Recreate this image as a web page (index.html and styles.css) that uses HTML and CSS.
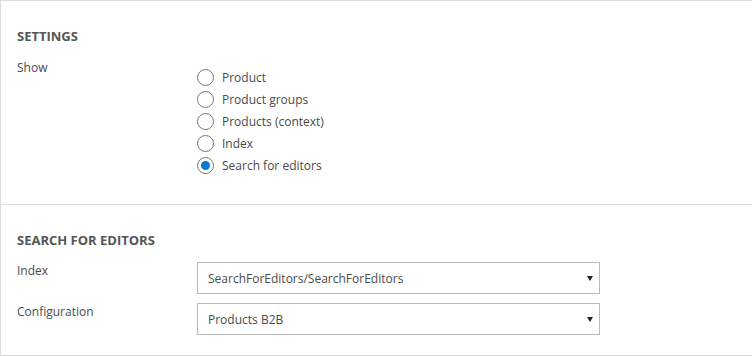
FILE: index.html
```html
<!DOCTYPE html>
<html lang="en">
<head>
    <meta charset="UTF-8">
    <meta name="viewport" content="width=device-width, initial-scale=1.0">
    <title>Settings</title>
    <link rel="stylesheet" href="styles.css">
</head>
<body>

<div class="panel">
    <!-- Impostazioni generali -->
    <div class="group">
        <h2>Settings</h2>
        <div class="row">
            <label class="field-label">Show</label>
            <div class="radio-list">
                <label class="radio"><input type="radio" name="show"> Product</label>
                <label class="radio"><input type="radio" name="show"> Product groups</label>
                <label class="radio"><input type="radio" name="show"> Products (context)</label>
                <label class="radio"><input type="radio" name="show"> Index</label>
                <label class="radio"><input type="radio" name="show" checked> Search for editors</label>
            </div>
        </div>
    </div>

    <!-- Ricerca per editor -->
    <div class="group group-search">
        <h2>Search for editors</h2>
        <div class="row row-select">
            <label class="field-label" for="index-select">Index</label>
            <div class="select-wrap">
                <select id="index-select">
                    <option>SearchForEditors/SearchForEditors</option>
                </select>
            </div>
        </div>
        <div class="row row-select">
            <label class="field-label" for="config-select">Configuration</label>
            <div class="select-wrap">
                <select id="config-select">
                    <option>Products B2B</option>
                </select>
            </div>
        </div>
    </div>
</div>

</body>
</html>
```

FILE: styles.css
```css
body {
    font-family: "Open Sans", "Noto Sans", sans-serif;
    font-size: 12px;
    color: #4a4a4a;
    background-color: #fff;
    margin: 0;
}
.panel {
    border-top: 1px solid #ddd;
    border-left: 1px solid #ddd;
}
.group {
    padding: 26px 17px 28px 16px;
    border-bottom: 1px solid #ddd;
}
.group-search {
    padding-top: 26px;
    padding-bottom: 20px;
}
h2 {
    margin: 0 0 15px 0;
    font-size: 13px;
    line-height: 18px;
    font-weight: bold;
    text-transform: uppercase;
    color: #555;
}
.group-search h2 {
    margin-bottom: 13px;
}
.row {
    display: flex;
}
.field-label {
    width: 180px;
    flex-shrink: 0;
    line-height: 16px;
}
.radio-list {
    padding-top: 6px;
    display: flex;
    flex-direction: column;
}
.radio {
    display: flex;
    align-items: center;
    height: 22px;
}
.radio input {
    appearance: none;
    width: 17px;
    height: 17px;
    margin: 0 8px 0 0;
    border: 1px solid #777;
    border-radius: 50%;
    background: #fff;
    display: flex;
    align-items: center;
    justify-content: center;
}
.radio input:checked::after {
    content: "";
    width: 9px;
    height: 9px;
    border-radius: 50%;
    background: #0a78cc;
}
.row-select {
    margin-bottom: 9px;
}
.row-select:last-child {
    margin-bottom: 0;
}
.row-select .field-label {
    padding-top: 1px;
}
.select-wrap {
    position: relative;
    width: 403px;
}
.select-wrap::after {
    content: "";
    position: absolute;
    right: 7px;
    top: 14px;
    border-left: 3px solid transparent;
    border-right: 3px solid transparent;
    border-top: 5px solid #222;
}
select {
    appearance: none;
    width: 100%;
    height: 32px;
    padding: 0 10px;
    border: 1px solid #bbb;
    border-radius: 0;
    background: #fff;
    font-family: inherit;
    font-size: 12px;
    color: #4a4a4a;
}
```
